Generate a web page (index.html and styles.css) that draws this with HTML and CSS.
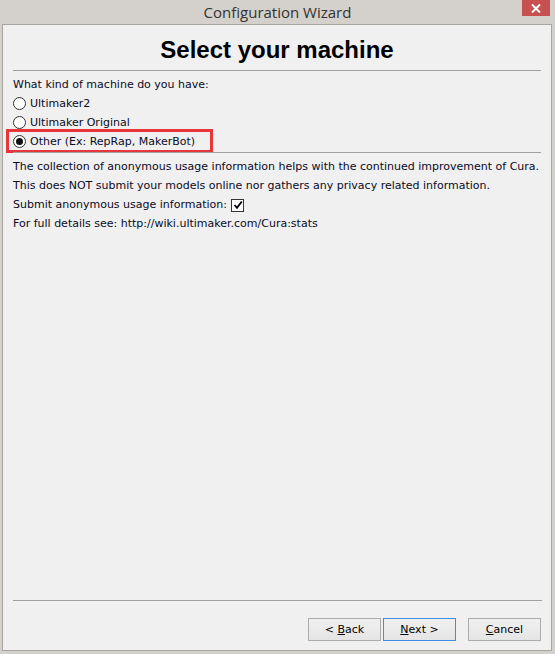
FILE: index.html
```html
<!DOCTYPE html>
<html>
<head>
	<meta charset="UTF-8">
	<title>Configuration Wizard</title>
	<link rel="stylesheet" href="styles.css">
</head>
<body>
	<div class="window">
		<div class="titlebar">
			<span class="title">Configuration Wizard</span>
			<a class="close" href="javascript:;">
				<svg width="10" height="9" viewBox="0 0 10 9"><path d="M1 0.5 L9 8.5 M9 0.5 L1 8.5" stroke="#fff" stroke-width="2"/></svg>
			</a>
		</div>
		<div class="client">
			<h1 class="page_title">Select your machine</h1>
			<div class="sep"></div>
			<p class="line">What kind of machine do you have:</p>
			<label class="radio"><span class="dot"></span>Ultimaker2</label>
			<label class="radio"><span class="dot"></span>Ultimaker Original</label>
			<label class="radio marked"><span class="dot on"></span>Other (Ex: RepRap, MakerBot)</label>
			<div class="sep sep2"></div>
			<p class="line">The collection of anonymous usage information helps with the continued improvement of Cura.</p>
			<p class="line">This does NOT submit your models online nor gathers any privacy related information.</p>
			<p class="line">Submit anonymous usage information: <span class="check"><svg width="10" height="10" viewBox="0 0 10 10"><path d="M1.5 5 L4 7.8 L8.8 1.5" fill="none" stroke="#000" stroke-width="1.8"/></svg></span></p>
			<p class="line">For full details see: http://wiki.ultimaker.com/Cura:stats</p>

			<div class="footer">
				<div class="sep"></div>
				<div class="buttons">
					<a class="btn" href="javascript:;">&lt;&nbsp;<u>B</u>ack</a>
					<a class="btn default" href="javascript:;"><u>N</u>ext&nbsp;&gt;</a>
					<a class="btn cancel" href="javascript:;"><u>C</u>ancel</a>
				</div>
			</div>
		</div>
	</div>
</body>
</html>
```

FILE: styles.css
```css
* { margin: 0; padding: 0; box-sizing: border-box; }
html, body { width: 555px; height: 654px; overflow: hidden; }
body { background: #d4d0cb; font-family: Tahoma, "DejaVu Sans", "Liberation Sans", sans-serif; font-size: 11px; color: #0a0a1e; }

.window { height: 654px; display: flex; flex-direction: column; }

.titlebar { height: 24px; position: relative; display: flex; justify-content: center; align-items: center; }
.title { font-family: "Open Sans", "Noto Sans", sans-serif; font-size: 15px; color: #333; padding-bottom: 1px; }
.close { position: absolute; top: 0; right: 5px; width: 28px; height: 16px; background: #c75050; display: flex; align-items: center; justify-content: center; }

.client { flex: 1; margin: 0 3px 3px 2px; border: 1px solid #a9a6a2; background: #f0f0f0; display: flex; flex-direction: column; padding: 0 10px 9px 10px; }

.page_title { font-family: "Liberation Sans", Arial, sans-serif; font-weight: bold; font-size: 24px; line-height: 28px; text-align: center; color: #000; padding-top: 11px; }

.sep { height: 1px; background: #a0a0a0; margin-top: 6px; }
.sep2 { margin-top: 1px; }

.line { line-height: 19px; white-space: nowrap; }
.sep + .line { margin-top: 4px; }

.radio { display: flex; align-items: center; height: 19px; width: 196px; }
.dot { width: 13px; height: 13px; border: 1px solid #333; border-radius: 50%; background: #fff; margin-right: 4px; display: flex; align-items: center; justify-content: center; }
.dot.on::after { content: ""; width: 7px; height: 7px; border-radius: 50%; background: #111; }
.marked { outline: 3px solid #e8373c; outline-offset: -1px; margin-left: -5px; padding-left: 5px; width: 203px; height: 20px; margin-top: -1px; }

.check { display: inline-flex; width: 13px; height: 13px; border: 1px solid #333; background: #fff; vertical-align: -2px; align-items: center; justify-content: center; margin-left: 1px; }

.footer { margin-top: auto; }
.footer .sep { margin: 0 -1px 17px 0; }
.buttons { display: flex; justify-content: flex-end; }
.btn { width: 73px; height: 23px; border: 1px solid #acacac; background: linear-gradient(#f0f0f0, #e5e5e5); color: #000; text-decoration: none; display: flex; align-items: center; justify-content: center; font-size: 11px; margin-left: 2px; }
.btn.default { border-color: #3c8ee8; }
.btn.cancel { margin-left: 12px; }
```
